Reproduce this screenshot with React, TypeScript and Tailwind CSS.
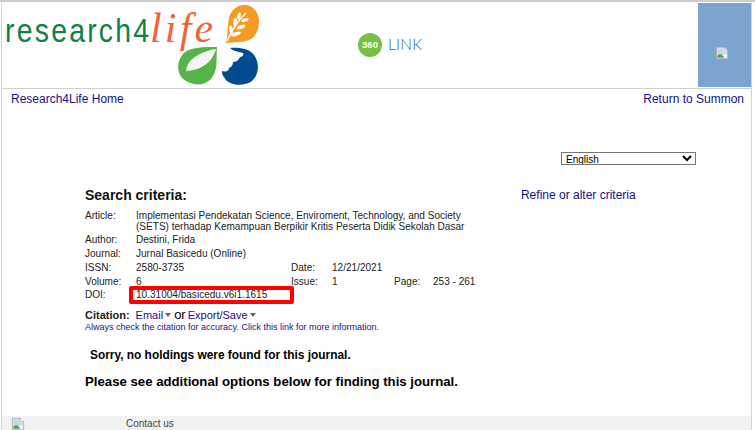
const LINK = "text-[#14108f]";

function BrokenImage({ className }: { className?: string }) {
  return (
    <svg viewBox="0 0 16 16" className={className}>
      <path d="M1.5 1.5H10.5L14.5 5.5V14.5H1.5Z" fill="#f4f7fb" stroke="#a9a9a9" />
      <path d="M10.5 1.5V5.5H14.5" fill="#fff" stroke="#a9a9a9" />
      <path d="M2.5 2.5H9.5V6.5H13.5V9L2.5 11Z" fill="#c3d6f2" />
      <path d="M2.5 13.5V11.5C5 8.5 8 8.5 10.5 13.5Z" fill="#4fa83d" />
    </svg>
  );
}

function Logo() {
  return (
    <div className="relative w-[261px] h-[85px] shrink-0">
      <div className="absolute left-[3px] top-[6px] flex items-baseline leading-[40px] whitespace-nowrap">
        <span className="text-[#0f8144] text-[33px] tracking-[2.6px] [font-family:'Liberation_Sans_Narrow','Liberation_Sans',sans-serif] scale-x-[0.86] origin-left inline-block w-[145px]">research4</span>
        <span className="text-[#f0643a] text-[42px] italic tracking-[3.2px] [font-family:'Liberation_Serif',serif]">life</span>
      </div>
      <svg viewBox="175 2 87 86" className="absolute left-[173px] top-0 w-[87px] h-[86px]">
        <path d="M226 43C229 30 226 18 233 10C240 3 252 3 257 13C261 21 259 34 251 39C244 43 234 42 226 43Z" fill="#f59a23" />
        <path d="M227 41C231 32 236 22 246 13" stroke="#fff" strokeWidth="1.6" fill="none" />
        <g fill="#fff">
          <ellipse cx="231" cy="30" rx="1.8" ry="4.5" transform="rotate(-10 231 30)" />
          <ellipse cx="236" cy="34" rx="1.8" ry="5" transform="rotate(70 236 34)" />
          <ellipse cx="235" cy="22" rx="1.8" ry="4" transform="rotate(5 235 22)" />
          <ellipse cx="241" cy="27" rx="1.8" ry="4.5" transform="rotate(70 241 27)" />
          <ellipse cx="239" cy="16" rx="1.6" ry="3.5" transform="rotate(15 239 16)" />
          <ellipse cx="245" cy="20" rx="1.6" ry="3.8" transform="rotate(70 245 20)" />
        </g>
        <path d="M217 47C205 47 190 47 184 53C176 61 176 75 186 81C196 87 208 85 213 76C218 68 216 58 217 47Z" fill="#55b447" />
        <path d="M186 71C187 60 198 52 216 49C213 60 204 70 186 71Z" fill="#f1f7ef" />
        <path d="M230 48C240 47 250 49 254 55C260 63 259 75 252 81C244 87 228 86 224 77C222 75 222 73 222 71C226 72 229 71 229 68C232 67 233 64 233 62C236 62 239 60 240 57C243 57 244 54 243 53C239 52 233 51 230 48Z" fill="#004c91" />
      </svg>
    </div>
  );
}

export default function App() {
  return (
    <div className="w-[755px] h-[430px] overflow-hidden bg-white text-black flex flex-col [font-family:'Liberation_Sans',Arial,sans-serif]">
      <div className="h-[2px] shrink-0 bg-[#cdcdcd]" />
      <div className="flex-1 min-h-0 flex flex-col ml-[1px] mr-[3px] border-x border-[#d4d4d4]">
        <header className="h-[87px] shrink-0 border-b border-[#d0d0d0] flex items-start">
          <Logo />
          <div className="ml-[95px] mt-[31px] flex items-center gap-[6px]">
            <span className="w-[24px] h-[24px] rounded-full bg-[#76c044] text-white text-[9.5px] font-bold flex items-center justify-center">360</span>
            <span className="text-[#1565ad] text-[15.5px] font-light [font-family:'Lato',sans-serif] tracking-[0.2px]">LINK</span>
          </div>
          <div className="ml-auto mt-[1px] w-[53px] h-[84px] bg-[#7ba4cf] flex items-center justify-center">
            <BrokenImage className="w-[14px] h-[14px] mt-[16px] mr-[5px]" />
          </div>
        </header>

        <nav className={`flex justify-between pl-[9px] pr-[7px] pt-[2px] text-[12px] leading-[16px] ${LINK}`}>
          <span>Research4Life Home</span>
          <span>Return to Summon</span>
        </nav>

        <div className="flex justify-end pr-[55px] mt-[45px]">
          <select className="appearance-auto w-[135px] h-[13px] border border-[#767676] bg-white text-[10px] leading-none py-0 pl-0 text-black [font-family:'Liberation_Sans',sans-serif]">
            <option>English</option>
          </select>
        </div>

        <main className="flex-1 min-h-0 pl-[83px] flex flex-col">
          <div className="flex items-start mt-[21px]">
            <h1 className="text-[14px] leading-[18px] font-bold text-[#111]">Search criteria:</h1>
            <span className={`ml-[334px] mt-[1px] text-[12px] leading-[16px] ${LINK}`}>Refine or alter criteria</span>
          </div>

          <div className="relative mt-[6px] w-[420px] text-[10.05px] leading-[11px] text-[#222]">
            <div className="grid grid-cols-[51px_155px_41px_62px_39px_auto]">
              <span>Article:</span>
              <span className="col-span-5 w-[345px]">Implementasi Pendekatan Science, Enviroment, Technology, and Society (SETS) terhadap Kemampuan Berpikir Kritis Peserta Didik Sekolah Dasar</span>
              <span className="mt-[2px]">Author:</span>
              <span className="col-span-5 mt-[2px]">Destini, Frida</span>
              <span className="mt-[3px]">Journal:</span>
              <span className="col-span-5 mt-[3px]">Jurnal Basicedu (Online)</span>
              <span className="mt-[3px]">ISSN:</span>
              <span className="mt-[3px]">2580-3735</span>
              <span className="mt-[3px]">Date:</span>
              <span className="col-span-3 mt-[3px]">12/21/2021</span>
              <span className="mt-[3px]">Volume:</span>
              <span className="mt-[3px]">6</span>
              <span className="mt-[3px]">Issue:</span>
              <span className="mt-[3px]">1</span>
              <span className="mt-[3px]">Page:</span>
              <span className="mt-[3px]">253 - 261</span>
              <span className="mt-[2px]">DOI:</span>
              <span className="col-span-5 mt-[2px]">10.31004/basicedu.v6i1.1615</span>
            </div>
            <div className="absolute left-[44px] top-[76px] w-[165px] h-[18px] border-[4px] border-[#ff0000] rounded-[2px]" />
          </div>

          <div className="mt-[8px] text-[11px] leading-[14px] flex items-center">
            <span className="font-bold text-[#222]">Citation:</span>
            <span className={`ml-[6px] ${LINK}`}>Email</span>
            <span className="ml-[2px] w-0 h-0 border-x-[3.5px] border-x-transparent border-t-[4px] border-t-[#666]" />
            <span className="ml-[3px] text-[13px]">or</span>
            <span className={`ml-[2px] ${LINK}`}>Export/Save</span>
            <span className="ml-[2px] w-0 h-0 border-x-[3.5px] border-x-transparent border-t-[4px] border-t-[#666]" />
          </div>
          <div className={`text-[9px] leading-[11px] ${LINK}`}>Always check the citation for accuracy. Click this link for more information.</div>

          <p className="mt-[15px] ml-[5px] text-[11.9px] leading-[14px] font-bold">Sorry, no holdings were found for this journal.</p>
          <p className="mt-[12px] text-[13.2px] leading-[15px] font-bold">Please see additional options below for finding this journal.</p>
        </main>

        <footer className="h-[14px] shrink-0 bg-[#f2f2f2] flex items-start overflow-hidden text-[10px] leading-[15px] text-[#444]">
          <BrokenImage className="ml-[9px] mt-[1px] w-[14px] h-[14px] shrink-0" />
          <span className="ml-[101px]">Contact us</span>
        </footer>
      </div>
    </div>
  );
}
